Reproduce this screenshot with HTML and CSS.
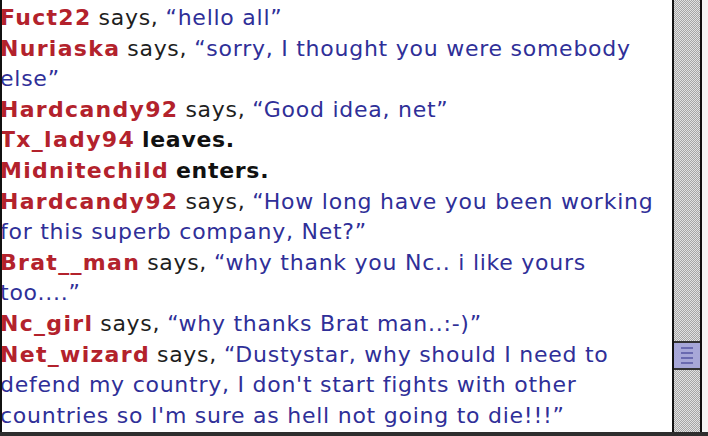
FILE: index.html
```html
<!DOCTYPE html>
<html>
<head>
<meta charset="utf-8">
<link rel="stylesheet" href="styles.css">
</head>
<body>
<div class="window">
  <div class="pane">
    <div class="log">
      <p class="line"><span class="name">Fuct22</span> <span class="verb">says,</span> <span class="msg">“hello all”</span></p>
      <p class="line"><span class="name">Nuriaska</span> <span class="verb">says,</span> <span class="msg">“sorry, I thought you were somebody<br>else”</span></p>
      <p class="line"><span class="name">Hardcandy92</span> <span class="verb">says,</span> <span class="msg">“Good idea, net”</span></p>
      <p class="line"><span class="name">Tx_lady94</span> <span class="event">leaves.</span></p>
      <p class="line"><span class="name">Midnitechild</span> <span class="event">enters.</span></p>
      <p class="line"><span class="name">Hardcandy92</span> <span class="verb">says,</span> <span class="msg">“How long have you been working<br>for this superb company, Net?”</span></p>
      <p class="line"><span class="name">Brat__man</span> <span class="verb">says,</span> <span class="msg">“why thank you Nc.. i like yours<br>too....”</span></p>
      <p class="line"><span class="name">Nc_girl</span> <span class="verb">says,</span> <span class="msg">“why thanks Brat man..:-)”</span></p>
      <p class="line"><span class="name">Net_wizard</span> <span class="verb">says,</span> <span class="msg">“Dustystar, why should I need to<br>defend my country, I don't start fights with other<br>countries so I'm sure as hell not going to die!!!”</span></p>
    </div>
  </div>
  <div class="scrollbar">
    <div class="track">
      <div class="thumb">
        <span class="grip"></span><span class="grip"></span><span class="grip"></span><span class="grip"></span>
      </div>
    </div>
  </div>
  <div class="edge"></div>
</div>
<div class="bottom"></div>
</body>
</html>
```
FILE: styles.css
```css
html, body {
  margin: 0;
  padding: 0;
  width: 708px;
  height: 436px;
  overflow: hidden;
  background: #fff;
}

.window {
  display: flex;
  height: 432px;
}

.pane {
  flex: 1;
  border-left: 2px solid #111;
  overflow: hidden;
}

.log {
  padding-top: 3px;
  margin-left: -2px;
  font-family: "DejaVu Sans", sans-serif;
  font-size: 22px;
  line-height: 30.6px;
  white-space: nowrap;
}

.line {
  margin: 0;
}

.name {
  color: #b3222c;
  font-weight: bold;
  letter-spacing: 1.3px;
}

.verb {
  color: #1e1e1e;
  letter-spacing: 0.7px;
}

.event {
  color: #111;
  font-weight: bold;
  letter-spacing: 0.7px;
}

.msg {
  color: #2f2f98;
  letter-spacing: 0.75px;
}

.scrollbar {
  width: 30px;
  margin-left: 12px;
  display: flex;
}

.track {
  flex: 1;
  border-left: 2px solid #111;
  border-right: 2px solid #111;
  background-color: #c4c4c4;
  background-image: repeating-conic-gradient(#a6a6a6 0 25%, #e2e2e2 0 50%);
  background-size: 2px 2px;
  display: flex;
  flex-direction: column;
  padding-top: 341px;
}

.thumb {
  height: 29px;
  background: #a7a7d8;
  border-top: 2px solid #333;
  border-bottom: 2px solid #333;
  box-sizing: border-box;
  display: flex;
  flex-direction: column;
  align-items: center;
  justify-content: center;
  gap: 3px;
}

.grip {
  display: block;
  width: 12px;
  height: 2px;
  background: #6a6ab0;
}

.edge {
  width: 6px;
  background: #f4f4f4;
}

.bottom {
  height: 4px;
  background: #2e2e2e;
}
```
